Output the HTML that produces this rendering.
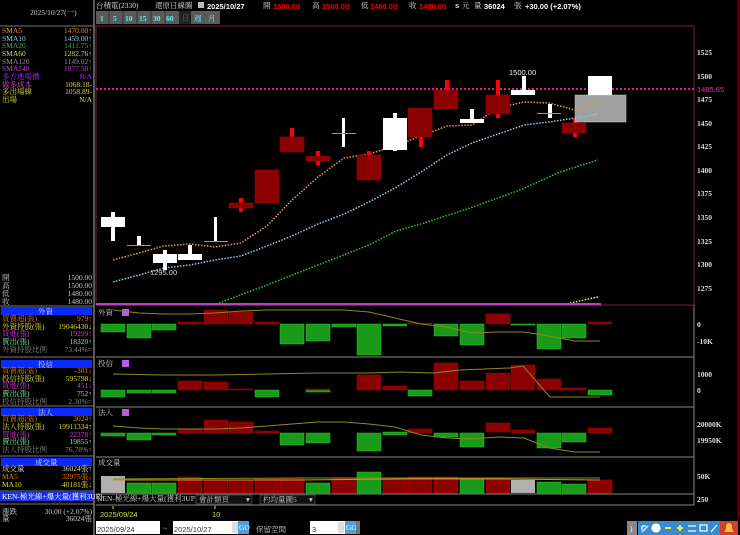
<!DOCTYPE html>
<html><head><meta charset="utf-8"><style>
html,body{margin:0;padding:0;background:#000;width:740px;height:535px;overflow:hidden}
svg{display:block}
text{font-family:"Liberation Serif","Noto Serif CJK SC","Noto Sans CJK TC",serif;font-size:7.5px}
.s{font-family:"Liberation Sans","Noto Sans CJK TC",sans-serif}
.b{font-family:"Liberation Sans",sans-serif;font-weight:bold}
.ax{font-family:"Liberation Sans",sans-serif;font-weight:bold;font-size:8px;fill:#ddd}
</style></head><body>
<svg width="740" height="535" viewBox="0 0 740 535" xmlns="http://www.w3.org/2000/svg">
<rect width="740" height="535" fill="#000"/>
<!-- frames -->
<line x1="94" y1="0" x2="94" y2="535" stroke="#777" stroke-width="1.5"/>
<line x1="0" y1="26" x2="94" y2="26" stroke="#777"/>
<rect x="96" y="26" width="598" height="279" fill="none" stroke="#7a2040" stroke-width="1"/>
<line x1="738.5" y1="0" x2="738.5" y2="535" stroke="#800" stroke-width="1"/>
<line x1="96" y1="357" x2="694" y2="357" stroke="#888"/>
<line x1="96" y1="407" x2="694" y2="407" stroke="#888"/>
<line x1="96" y1="457" x2="694" y2="457" stroke="#888"/>
<line x1="96" y1="494" x2="694" y2="494" stroke="#888"/>
<line x1="96" y1="505" x2="694" y2="505" stroke="#888"/>
<line x1="694" y1="305" x2="694" y2="505" stroke="#888"/>

<!-- header -->
<text x="96" y="8" fill="#ddd">台積電(2330)</text>
<text x="155" y="8" fill="#ddd">還原日線圖</text>
<rect x="198" y="2" width="6" height="6" fill="#bbb"/>
<text x="207" y="9" class="b" font-size="9" fill="#fff">2025/10/27</text>
<text x="263" y="8" fill="#ddd">開</text><text x="273" y="9" class="b" font-size="9" fill="#e00">1500.00</text>
<text x="312" y="8" fill="#ddd">高</text><text x="322" y="9" class="b" font-size="9" fill="#e00">1500.00</text>
<text x="361" y="8" fill="#ddd">低</text><text x="370" y="9" class="b" font-size="9" fill="#e00">1480.00</text>
<text x="409" y="8" fill="#ddd">收</text><text x="419" y="9" class="b" font-size="9" fill="#e00">1480.00</text>
<text x="455" y="8" fill="#ddd" class="b">s</text><text x="462" y="8" fill="#ddd">元</text>
<text x="474" y="8" fill="#ddd">量</text><text x="484" y="9" class="b" font-size="9" fill="#fff">36024</text>
<text x="514" y="8" fill="#ddd">張</text>
<text x="525" y="9" class="b" font-size="9" fill="#fff">+30.00 (+2.07%)</text>

<!-- toolbar -->
<rect x="96" y="11" width="124" height="13" fill="#5a5a5a"/>
<g class="b" font-size="8" fill="#6ee">
<text x="100" y="21">1</text><text x="113" y="21">5</text><text x="125" y="21">10</text><text x="139" y="21">15</text><text x="153" y="21">30</text><text x="166" y="21">60</text>
</g>
<g stroke="#333"><line x1="109" y1="11" x2="109" y2="24"/><line x1="123" y1="11" x2="123" y2="24"/><line x1="137" y1="11" x2="137" y2="24"/><line x1="151" y1="11" x2="151" y2="24"/><line x1="165" y1="11" x2="165" y2="24"/></g>
<rect x="179" y="11" width="12" height="13" fill="#222"/>
<text x="182" y="20" fill="#666" font-size="6">日</text>
<text x="194" y="21" fill="#6ee">週</text><text x="208" y="21" fill="#6ee">月</text>

<!-- left panel -->
<text x="30" y="15" fill="#ccc">2025/10/27(一)</text>
<g>
<text x="2" y="33" fill="#e08a3a">SMA5</text><text x="92" y="33" fill="#e08a3a" text-anchor="end">1470.00↑</text>
<text x="2" y="41" fill="#8cd">SMA10</text><text x="92" y="41" fill="#8cd" text-anchor="end">1459.00↑</text>
<text x="2" y="48" fill="#3b3">SMA20</text><text x="92" y="48" fill="#3b3" text-anchor="end">1411.75↑</text>
<text x="2" y="56" fill="#dd3">SMA60</text><text x="92" y="56" fill="#dd3" text-anchor="end">1282.76↑</text>
<text x="2" y="64" fill="#a88">SMA120</text><text x="92" y="64" fill="#a88" text-anchor="end">1149.02↑</text>
<text x="2" y="71" fill="#b4c">SMA240</text><text x="92" y="71" fill="#b4c" text-anchor="end">1077.58↑</text>
<text x="2" y="79" fill="#a3e">多方進場價</text><text x="92" y="79" fill="#a3e" text-anchor="end">N/A</text>
<text x="2" y="87" fill="#c5c">做多成本</text><text x="92" y="87" fill="#dd3" text-anchor="end">1068.18-</text>
<text x="2" y="94" fill="#dd3">多出場線</text><text x="92" y="94" fill="#dd3" text-anchor="end">1058.89-</text>
<text x="2" y="102" fill="#dd3">出場</text><text x="92" y="102" fill="#dd3" text-anchor="end">N/A</text>
</g>
<g fill="#ccc">
<text x="2" y="280">開</text><text x="92" y="280" text-anchor="end">1500.00</text>
<text x="2" y="288">高</text><text x="92" y="288" text-anchor="end">1500.00</text>
<text x="2" y="296">低</text><text x="92" y="296" text-anchor="end">1480.00</text>
<text x="2" y="304">收</text><text x="92" y="304" text-anchor="end">1480.00</text>
</g>
<line x1="0" y1="306" x2="94" y2="306" stroke="#777"/>
<rect x="1" y="307" width="91" height="8" fill="#0a2aff"/><text x="38" y="314" fill="#ddd">外資</text>
<text x="2" y="321" fill="#e70">買賣超(張)</text><text x="92" y="321" fill="#e70" text-anchor="end">979↑</text>
<text x="2" y="329" fill="#dd3">外資持股(張)</text><text x="92" y="329" fill="#dd3" text-anchor="end">19046430↓</text>
<text x="2" y="336" fill="#d3d">買進(張)</text><text x="92" y="336" fill="#d3d" text-anchor="end">19299↑</text>
<text x="2" y="344" fill="#7ea">賣出(張)</text><text x="92" y="344" fill="#7ea" text-anchor="end">18320↑</text>
<text x="2" y="352" fill="#888">外資持股比例</text><text x="92" y="352" fill="#888" text-anchor="end">73.44%=</text>
<line x1="0" y1="357" x2="94" y2="357" stroke="#777"/>
<rect x="1" y="360" width="91" height="8" fill="#0a2aff"/><text x="38" y="367" fill="#ddd">投信</text>
<text x="2" y="373" fill="#e70">買賣超(張)</text><text x="92" y="373" fill="#e70" text-anchor="end">-301↓</text>
<text x="2" y="381" fill="#dd3">投信持股(張)</text><text x="92" y="381" fill="#dd3" text-anchor="end">595798↓</text>
<text x="2" y="388" fill="#d3d">買進(張)</text><text x="92" y="388" fill="#d3d" text-anchor="end">451↓</text>
<text x="2" y="396" fill="#7ea">賣出(張)</text><text x="92" y="396" fill="#7ea" text-anchor="end">752↑</text>
<text x="2" y="404" fill="#888">投信持股比例</text><text x="92" y="404" fill="#888" text-anchor="end">2.30%=</text>
<line x1="0" y1="406" x2="94" y2="406" stroke="#777"/>
<rect x="1" y="408" width="91" height="8" fill="#0a2aff"/><text x="38" y="415" fill="#ddd">法人</text>
<text x="2" y="421" fill="#e70">買賣超(張)</text><text x="92" y="421" fill="#e70" text-anchor="end">3024↑</text>
<text x="2" y="429" fill="#dd3">法人持股(張)</text><text x="92" y="429" fill="#dd3" text-anchor="end">19911334↑</text>
<text x="2" y="437" fill="#d3d">買進(張)</text><text x="92" y="437" fill="#d3d" text-anchor="end">22378↑</text>
<text x="2" y="444" fill="#7ea">賣出(張)</text><text x="92" y="444" fill="#7ea" text-anchor="end">19855↑</text>
<text x="2" y="452" fill="#888">法人持股比例</text><text x="92" y="452" fill="#888" text-anchor="end">76.78%↑</text>
<line x1="0" y1="456" x2="94" y2="456" stroke="#777"/>
<rect x="1" y="458" width="91" height="8" fill="#0a2aff"/><text x="35" y="465" fill="#ddd">成交量</text>
<text x="2" y="471" fill="#ddd">成交量</text><text x="92" y="471" fill="#ddd" text-anchor="end">36024張↑</text>
<text x="2" y="479" fill="#e70">MA5</text><text x="92" y="479" fill="#e70" text-anchor="end">32975張↓</text>
<text x="2" y="487" fill="#dd3">MA10</text><text x="92" y="487" fill="#dd3" text-anchor="end">40181張↓</text>
<line x1="0" y1="491" x2="94" y2="491" stroke="#777"/>
<rect x="0" y="492" width="93" height="9" fill="#1830e0"/><text x="2" y="499" fill="#fff">KEN-極光線+爆大量(獲利3UP)</text>
<line x1="0" y1="504" x2="94" y2="504" stroke="#777"/>
<text x="2" y="514" fill="#ccc">漲跌</text><text x="92" y="514" fill="#ccc" text-anchor="end">30.00 (+2.07%)</text>
<text x="2" y="521" fill="#ccc">量</text><text x="92" y="521" fill="#ccc" text-anchor="end">36024張</text>

<!-- price axis -->
<g class="ax">
<text x="697" y="55">1525</text><text x="697" y="79">1500</text><text x="697" y="102">1475</text><text x="697" y="126">1450</text><text x="697" y="149">1425</text><text x="697" y="173">1400</text><text x="697" y="196">1375</text><text x="697" y="220">1350</text><text x="697" y="244">1325</text><text x="697" y="267">1300</text><text x="697" y="291">1275</text>
</g>
<text x="697" y="92" fill="#e3a" font-size="6.5" class="s">1485.65</text>
<line x1="96" y1="89" x2="694" y2="89" stroke="#e0208a" stroke-width="2" stroke-dasharray="2 2"/>

<!-- MA lines -->
<polyline fill="none" stroke="#e89a3a" stroke-width="1.5" stroke-dasharray="1.5 1.5" points="113,260 139,253 164,246 190,244 215,247 241,243 267,226 292,200 318,177 344,158 369,154 395,146 421,136 447,126 472,125 498,108 524,102 549,103 575,110 598,104"/>
<polyline fill="none" stroke="#8ccfe0" stroke-width="1.5" stroke-dasharray="1.5 1.5" points="113,282 139,275 164,268 190,265 215,260 241,256 267,246 292,236 318,224 344,214 369,202 395,188 421,172 447,155 472,143 498,134 524,125 549,122 575,118 598,114"/>
<polyline fill="none" stroke="#2c2" stroke-width="1.5" stroke-dasharray="1.5 1.5" points="219,303 267,285 318,265 369,245 396,231 421,224 470,208 520,190 560,172 598,160"/>
<polyline fill="none" stroke="#ee4" stroke-width="1.5" stroke-dasharray="1.5 1.5" points="570,303 598,297"/>
<rect x="96" y="303" width="505" height="2.5" fill="#c03cc0"/>

<!-- candles -->
<g fill="#fff">
<rect x="111" y="212" width="4" height="29"/><rect x="101" y="217" width="24" height="10"/>
<rect x="137" y="236" width="4" height="9"/><rect x="127" y="245" width="24" height="1" fill="#999"/>
<rect x="163" y="250" width="4" height="20"/><rect x="153" y="254" width="24" height="9"/>
<rect x="188" y="245" width="4" height="12"/><rect x="178" y="254" width="24" height="6"/>
<rect x="214" y="217" width="3" height="24"/><rect x="204" y="241" width="24" height="1" fill="#999"/>
<rect x="342" y="118" width="3" height="29"/><rect x="332" y="133" width="24" height="1" fill="#999"/>
<rect x="393" y="113" width="4" height="38"/><rect x="383" y="118" width="24" height="32"/>
<rect x="470" y="109" width="4" height="14"/><rect x="460" y="119" width="24" height="4"/>
<rect x="522" y="76" width="4" height="19"/><rect x="511" y="90" width="24" height="5"/>
<rect x="548" y="104" width="4" height="14"/><rect x="537" y="113" width="24" height="1" fill="#999"/>
</g>
<g>
<rect x="239" y="198" width="4" height="14" fill="#f00"/><rect x="229" y="203" width="24" height="5" fill="#8b0000" stroke="#a00" stroke-width=".5"/>
<rect x="255" y="170" width="24" height="33" fill="#8b0000" stroke="#a00" stroke-width=".5"/>
<rect x="290" y="128" width="4" height="12" fill="#f00"/><rect x="280" y="137" width="24" height="15" fill="#8b0000" stroke="#a00" stroke-width=".5"/>
<rect x="316" y="151" width="4" height="14" fill="#f00"/><rect x="306" y="156" width="24" height="5" fill="#8b0000" stroke="#a00" stroke-width=".5"/>
<rect x="367" y="151" width="4" height="6" fill="#f00"/><rect x="357" y="155" width="24" height="25" fill="#8b0000" stroke="#a00" stroke-width=".5"/>
<rect x="419" y="135" width="4" height="12" fill="#f00"/><rect x="408" y="108" width="24" height="29" fill="#8b0000" stroke="#a00" stroke-width=".5"/>
<rect x="445" y="80" width="4" height="12" fill="#f00"/><rect x="434" y="90" width="24" height="19" fill="#8b0000" stroke="#a00" stroke-width=".5"/>
<rect x="496" y="80" width="4" height="38" fill="#f00"/><rect x="486" y="95" width="24" height="19" fill="#8b0000" stroke="#a00" stroke-width=".5"/>
<rect x="573" y="118" width="4" height="19" fill="#f00"/><rect x="562" y="123" width="24" height="10" fill="#8b0000" stroke="#a00" stroke-width=".5"/>
</g>
<rect x="575" y="95" width="51" height="27" fill="#a0a0a0" stroke="#ccc" stroke-width=".5"/>
<rect x="588" y="76" width="24" height="19" fill="#fff"/>
<polyline fill="none" stroke="#e89a3a" stroke-width="1.5" stroke-dasharray="1.5 1.5" points="575,110 598,104"/>
<polyline fill="none" stroke="#8ccfe0" stroke-width="1.5" stroke-dasharray="1.5 1.5" points="575,118 598,114"/>
<text x="509" y="75" fill="#eee" class="s" font-size="7.5">1500.00</text>
<text x="150" y="275" fill="#ddd" class="s" font-size="7.5">1295.00</text>

<!-- 外資 -->
<text x="98" y="315" fill="#ccc">外資</text><rect x="122" y="309" width="7" height="7" fill="#b060e0"/>
<g fill="#1a9a1a" stroke="#2c2" stroke-width=".5">
<rect x="101" y="324" width="24" height="8"/><rect x="127" y="324" width="24" height="14"/><rect x="152" y="324" width="24" height="6"/>
<rect x="280" y="324" width="24" height="20"/><rect x="306" y="324" width="24" height="17"/><rect x="332" y="324" width="24" height="3"/><rect x="357" y="324" width="24" height="31"/><rect x="383" y="324" width="24" height="2"/>
<rect x="434" y="324" width="24" height="12"/><rect x="460" y="324" width="24" height="21"/><rect x="511" y="324" width="24" height="1"/><rect x="537" y="324" width="24" height="25"/><rect x="562" y="324" width="24" height="14"/>
</g>
<g fill="#8b0000" stroke="#a00" stroke-width=".5">
<rect x="178" y="322" width="24" height="2"/><rect x="204" y="310" width="24" height="14"/><rect x="229" y="312" width="24" height="12"/><rect x="255" y="322" width="24" height="2"/><rect x="408" y="323" width="24" height="1"/><rect x="486" y="314" width="24" height="10"/><rect x="588" y="322" width="24" height="2"/>
</g>
<polyline fill="none" stroke="#8a8a20" stroke-width="1" points="113,310 139,313 164,314 190,314 215,313 241,311 267,310 292,310 318,310 344,310 369,312 395,318 421,324 447,327 472,333 498,332 524,332 549,336 575,341 600,341"/>
<g class="ax"><text x="697" y="327">0</text><text x="697" y="344">-10K</text></g>

<!-- 投信 -->
<text x="98" y="366" fill="#ccc">投信</text><rect x="122" y="360" width="7" height="7" fill="#b060e0"/>
<g fill="#1a9a1a" stroke="#2c2" stroke-width=".5">
<rect x="101" y="390" width="24" height="7"/><rect x="127" y="390" width="24" height="3"/><rect x="152" y="390" width="24" height="3"/><rect x="255" y="390" width="24" height="7"/><rect x="306" y="390" width="24" height="2"/><rect x="408" y="390" width="24" height="6"/><rect x="588" y="390" width="24" height="5"/>
</g>
<g fill="#8b0000" stroke="#a00" stroke-width=".5">
<rect x="178" y="381" width="24" height="9"/><rect x="204" y="382" width="24" height="8"/><rect x="229" y="389" width="24" height="1"/><rect x="306" y="389" width="24" height="1" /><rect x="357" y="375" width="24" height="15"/><rect x="383" y="386" width="24" height="4"/>
<rect x="434" y="363" width="24" height="27"/><rect x="460" y="381" width="24" height="9"/><rect x="486" y="373" width="24" height="17"/><rect x="511" y="365" width="24" height="25"/><rect x="537" y="379" width="24" height="11"/><rect x="562" y="388" width="24" height="2"/>
</g>
<polyline fill="none" stroke="#8a8a20" stroke-width="1" points="113,374 164,375 215,375 267,374 318,373 369,373 400,372 434,373 460,370 510,368 523,366 550,397 600,397"/>
<g class="ax"><text x="697" y="377">1000</text><text x="697" y="393">0</text></g>

<!-- 法人 -->
<text x="98" y="415" fill="#ccc">法人</text><rect x="122" y="409" width="7" height="7" fill="#b060e0"/>
<g fill="#1a9a1a" stroke="#2c2" stroke-width=".5">
<rect x="101" y="433" width="24" height="3"/><rect x="127" y="433" width="24" height="7"/><rect x="152" y="433" width="24" height="2"/><rect x="280" y="433" width="24" height="12"/><rect x="306" y="433" width="24" height="10"/><rect x="357" y="433" width="24" height="18"/><rect x="383" y="432" width="24" height="3"/>
<rect x="434" y="433" width="24" height="4"/><rect x="460" y="433" width="24" height="14"/><rect x="537" y="433" width="24" height="15"/><rect x="562" y="433" width="24" height="9"/>
</g>
<g fill="#8b0000" stroke="#a00" stroke-width=".5">
<rect x="178" y="429" width="24" height="4"/><rect x="204" y="420" width="24" height="13"/><rect x="229" y="422" width="24" height="11"/><rect x="255" y="431" width="24" height="2"/><rect x="408" y="429" width="24" height="4"/><rect x="486" y="423" width="24" height="9"/><rect x="511" y="430" width="24" height="3"/><rect x="588" y="428" width="24" height="5"/>
</g>
<polyline fill="none" stroke="#8a8a20" stroke-width="1" points="113,426 139,428 164,429 190,429 215,429 241,428 267,426 292,424 318,422 344,422 369,424 395,427 421,435 447,438 472,439 498,437 524,438 549,448 575,452 600,452"/>
<g class="ax"><text x="697" y="427">20000K</text><text x="697" y="443">19950K</text></g>

<!-- 成交量 -->
<text x="98" y="465" fill="#ccc">成交量</text>
<g stroke-width=".5">
<rect x="101" y="476" width="24" height="17" fill="#b0b0b0"/>
<rect x="127" y="483" width="24" height="10" fill="#1a9a1a" stroke="#2c2"/><rect x="152" y="483" width="24" height="10" fill="#1a9a1a" stroke="#2c2"/>
<rect x="178" y="477" width="24" height="16" fill="#8b0000" stroke="#c00"/><rect x="204" y="480" width="24" height="13" fill="#8b0000" stroke="#c00"/><rect x="229" y="480" width="24" height="13" fill="#8b0000" stroke="#c00"/><rect x="255" y="479" width="24" height="14" fill="#8b0000" stroke="#c00"/><rect x="280" y="478" width="24" height="15" fill="#8b0000" stroke="#c00"/>
<rect x="306" y="483" width="24" height="10" fill="#1a9a1a" stroke="#2c2"/><rect x="332" y="478" width="24" height="15" fill="#8b0000" stroke="#c00"/><rect x="357" y="472" width="24" height="21" fill="#1a9a1a" stroke="#2c2"/><rect x="383" y="478" width="24" height="15" fill="#8b0000" stroke="#c00"/>
<rect x="408" y="477" width="24" height="16" fill="#8b0000" stroke="#c00"/><rect x="434" y="477" width="24" height="16" fill="#8b0000" stroke="#c00"/><rect x="460" y="478" width="24" height="15" fill="#1a9a1a" stroke="#2c2"/><rect x="486" y="480" width="24" height="13" fill="#8b0000" stroke="#c00"/>
<rect x="511" y="480" width="24" height="13" fill="#b0b0b0"/><rect x="537" y="482" width="24" height="11" fill="#1a9a1a" stroke="#2c2"/><rect x="562" y="484" width="24" height="9" fill="#1a9a1a" stroke="#2c2"/><rect x="588" y="480" width="24" height="13" fill="#8b0000" stroke="#c00"/>
</g>
<polyline fill="none" stroke="#e08a2a" stroke-width="1" points="113,480 300,480 400,479 500,479 600,480"/>
<polyline fill="none" stroke="#8a8a20" stroke-width="1" points="113,479 300,478 400,478 500,478 600,478"/>
<g class="ax"><text x="697" y="479">50K</text><text x="697" y="502">250</text></g>

<!-- selectors -->
<text x="97" y="501" fill="#ccc" font-size="6.5">KEN-極光線+爆大量(獲利3UP)</text>
<rect x="196" y="495" width="56" height="9" fill="#111" stroke="#666" stroke-width=".5"/><text x="199" y="502" fill="#ccc" font-size="6.5">會計類頁</text><text x="246" y="502" fill="#ccc" font-size="6">▾</text>
<rect x="260" y="495" width="55" height="9" fill="#111" stroke="#666" stroke-width=".5"/><text x="263" y="502" fill="#ccc" font-size="6.5">杓均量圖5</text><text x="309" y="502" fill="#ccc" font-size="6">▾</text>
<text x="100" y="517" fill="#dd3" class="s" font-size="8">2025/09/24</text>
<text x="212" y="517" fill="#dd3" class="s" font-size="8">10</text>
<line x1="113" y1="506" x2="113" y2="509" stroke="#dd3"/><line x1="215" y1="506" x2="215" y2="509" stroke="#dd3"/>

<!-- bottom bar -->
<rect x="95" y="519" width="645" height="16" fill="#000"/>
<rect x="96" y="521" width="64" height="13" fill="#fff"/><text x="97" y="532" fill="#333" class="s" font-size="10">2025/09/24</text>
<text x="163" y="531" fill="#ccc" font-size="9">~</text>
<rect x="173" y="521" width="65" height="13" fill="#fff"/><text x="174" y="532" fill="#333" class="s" font-size="10">2025/10/27</text>
<rect x="232" y="522" width="6" height="11" fill="#ddd"/>
<rect x="238" y="521" width="11" height="13" fill="#4aa0e0"/><text x="239" y="530" fill="#fff" font-size="6">GO</text>
<text x="256" y="532" fill="#aaa" class="s" font-size="12">保留空間</text>
<rect x="310" y="521" width="35" height="13" fill="#fff"/><text x="312" y="532" fill="#333" class="s" font-size="10">3</text>
<rect x="338" y="522" width="6" height="11" fill="#ddd"/>
<rect x="345" y="521" width="11" height="13" fill="#4aa0e0"/><text x="346" y="530" fill="#fff" font-size="6">GO</text>
<rect x="356" y="521" width="4" height="13" fill="#777"/>
<rect x="627" y="521" width="10" height="14" fill="#888"/><text x="630" y="531" fill="#fff" font-size="8">)</text>
<rect x="638" y="521" width="82" height="14" fill="#3a8ad0"/>
<g fill="none" stroke="#fff" stroke-width="1.2">
<path d="M642 532 L648 526 M642 526 L646 526 M642 526 L642 530"/>
<circle cx="656" cy="528" r="4" fill="#fff"/>
<path d="M665 528 H671" stroke="#ee3" stroke-width="2"/>
<path d="M677 528 H683 M680 525 V531" stroke="#ee3" stroke-width="2"/>
<path d="M688 526 H696 M688 531 H696"/>
<rect x="700" y="525" width="7" height="6"/>
<path d="M711 532 L717 525"/>
</g>
<rect x="720" y="521" width="18" height="14" fill="#d04030"/>
<path d="M724 532 H734 L732 529 V526 A3 3 0 0 0 726 526 V529 Z" fill="#f4c030"/>
</svg>
</body></html>
